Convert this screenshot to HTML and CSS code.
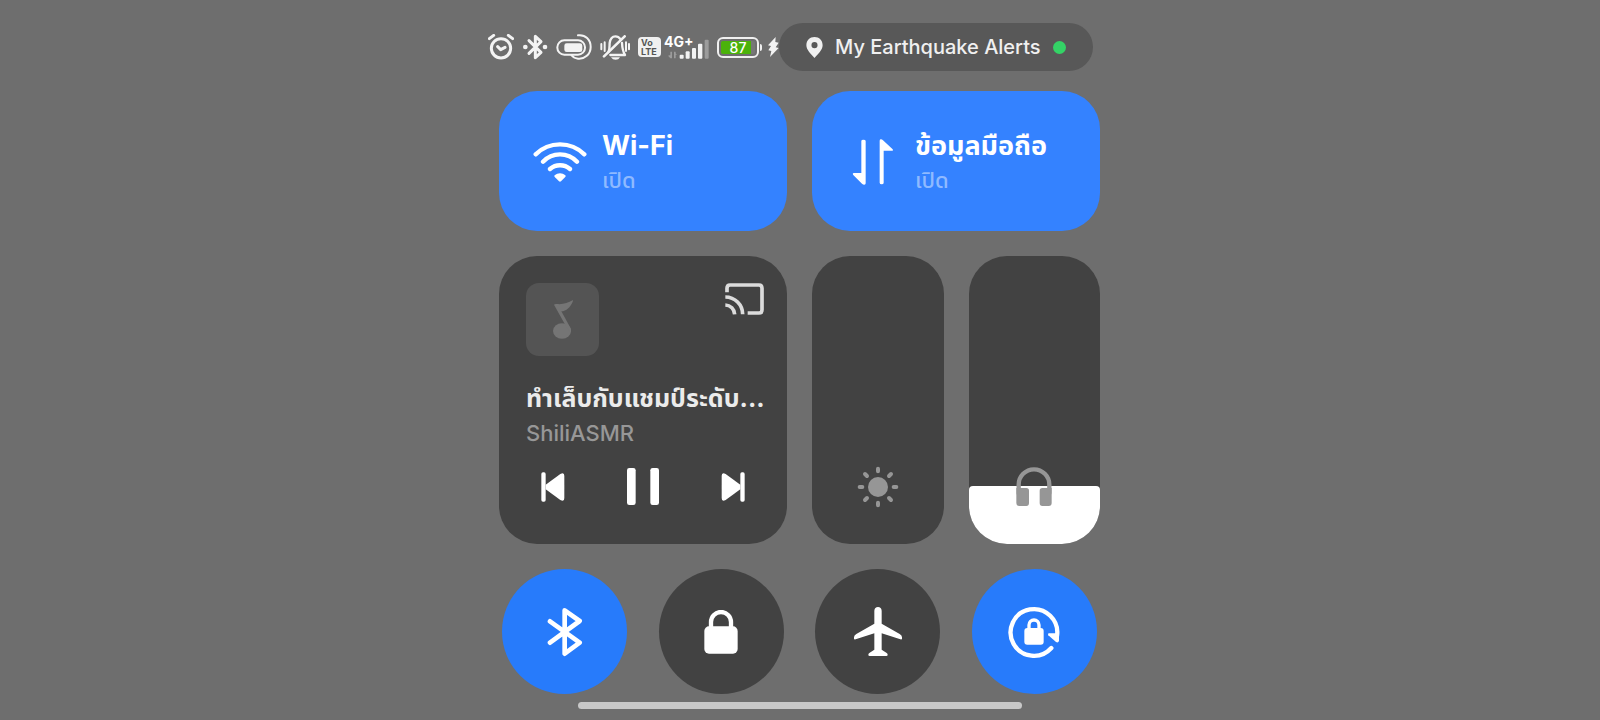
FILE: index.html
```html
<!DOCTYPE html>
<html lang="th">
<head>
    <meta charset="UTF-8">
    <meta name="viewport" content="width=device-width, initial-scale=1.0">
    <title>Control Center</title>
    <link rel="stylesheet" href="styles.css">
</head>
<body>
    <div class="panel">
        <header class="status">
            <div class="status-icons">
                <!-- alarm -->
                <svg class="line" width="26" height="26" viewBox="0 0 78 78" stroke-width="9">
                    <circle cx="39" cy="43" r="29"/>
                    <path d="M29 38L38 47L51 40M4 14L17 4M74 14L61 4"/>
                </svg>
                <!-- bluetooth connected -->
                <svg class="line" width="26" height="26" viewBox="0 0 78 78" stroke-width="9">
                    <path d="M21 20L57 55L40 71V7L57 23L21 58"/>
                    <circle class="solid" cx="10" cy="39" r="7"/>
                    <circle class="solid" cx="69" cy="39" r="7"/>
                </svg>
                <!-- toggle capsule -->
                <svg class="line" width="36" height="26" viewBox="0 0 108 78" stroke-width="6">
                    <rect x="4" y="19" width="83" height="43" rx="21"/>
                    <rect class="solid" x="25" y="28" width="54" height="26" rx="7"/>
                    <path d="M66 4C88 1 104 17 104 39S86 76 66 74C58 73 50 69 46 63"/>
                </svg>
                <!-- vibrate / silent -->
                <svg class="line" width="30" height="26" viewBox="0 0 90 78" stroke-width="7">
                    <path d="M25 54C30 46 28 36 29 27C31 13 37 7 46 7C52 7 57 9 60 14M66 27C67 45 68 52 75 63H31"/>
                    <path d="M74 7L12 67" stroke-width="8"/>
                    <path d="M4 30V46M14 25V51M78 25V51M87 30V46" stroke-width="6"/>
                    <path class="solid" stroke="none" d="M33 70H60C55 80 39 80 33 70Z"/>
                </svg>
                <div class="network">
                    <div class="volte"><span>Vo</span><span>LTE</span></div>
                    <div class="signal">
                        <span class="signal-type">4G+</span>
                        <svg class="signal-bars" width="43" height="20" viewBox="0 0 129 60">
                            <path class="faint" d="M13 38h5v20h-5zM6 50l7 8v-10zM24 38l9 9h-9zM24 38h5v20h-5z"/>
                            <rect x="41" y="47" width="12" height="12" rx="3"/>
                            <rect x="59" y="37" width="12" height="22" rx="3"/>
                            <rect x="78" y="27" width="12" height="32" rx="3"/>
                            <rect x="96" y="14" width="13" height="45" rx="3"/>
                            <rect class="faint" x="116" y="2" width="12" height="57" rx="3"/>
                        </svg>
                    </div>
                </div>
                <div class="power">
                    <div class="battery"><span class="battery-level">87</span></div>
                    <svg width="11" height="20" viewBox="0 0 33 60">
                        <path d="M23 0L0 25L9 27L1 40L10 42L6 60L32 33L23 31L32 17L22 15Z"/>
                    </svg>
                </div>
            </div>
            <button class="pill">
                <svg width="17" height="21" viewBox="0 0 50 62">
                    <path fill-rule="evenodd" d="M25 0C11 0 1 10 1 24C1 38 15 50 25 62C35 50 49 38 49 24C49 10 39 0 25 0ZM25 15a9 9 0 1 1 0 18a9 9 0 1 1 0-18Z"/>
                </svg>
                <span>My Earthquake Alerts</span>
                <i class="dot"></i>
            </button>
        </header>

        <main class="grid">
            <button class="tile">
                <span class="tile-icon">
                    <svg class="line" width="54" height="40" viewBox="0 0 160 120" stroke-width="13">
                        <path d="M7 37A104 104 0 0 1 153 37M29 59A70 70 0 0 1 131 59M50 81A46 46 0 0 1 110 81"/>
                        <path class="solid" stroke="none" d="M64 100C73 92 87 92 96 100C98 102 97 104 95 106L83 118Q80 120 77 118L65 106C63 104 62 102 64 100Z"/>
                    </svg>
                </span>
                <span class="tile-text">
                    <span class="tile-name">Wi-Fi</span>
                    <span class="tile-state">เปิด</span>
                </span>
            </button>
            <button class="tile">
                <span class="tile-icon">
                    <svg width="42" height="46" viewBox="0 0 124 138">
                        <path d="M27 6Q27 2 33 2Q40 2 40 6V133Q40 137 36 137Q32 137 29 134L2 107Q0 103 4 102H27Z"/>
                        <path d="M82 5Q82 1 86 1Q89 1 92 4L121 31Q124 35 120 35H94V131Q94 136 88 136Q82 136 82 131Z"/>
                    </svg>
                </span>
                <span class="tile-text">
                    <span class="tile-name">ข้อมูลมือถือ</span>
                    <span class="tile-state">เปิด</span>
                </span>
            </button>

            <section class="media">
                <div class="media-top">
                    <div class="art">
                        <svg width="20" height="39" viewBox="0 0 60 117">
                            <ellipse cx="27" cy="93" rx="27" ry="23"/>
                            <path d="M3 14Q5 11 12 12C30 14 45 8 59 1Q62 0 59 5C52 22 40 33 25 34L53 85Q55 91 53 98L42 84Z"/>
                        </svg>
                    </div>
                    <button class="icon-button" aria-label="Cast">
                        <svg class="cast" width="39" height="32" viewBox="0 0 117 96" stroke-width="11">
                            <path d="M6 28V16Q6 6 15 6H102Q111 6 111 16V80Q111 90 102 90H68"/>
                            <path d="M1 42A52 52 0 0 1 53 94M1 66A29 29 0 0 1 29 94"/>
                        </svg>
                    </button>
                </div>
                <div class="media-title">ทำเล็บกับแชมป์ระดับ...</div>
                <div class="media-artist">ShiliASMR</div>
                <div class="controls">
                    <button class="icon-button" aria-label="Previous">
                        <svg width="24" height="30" viewBox="0 0 70 90">
                            <rect x="0" y="1" width="13" height="88" rx="5"/>
                            <path d="M13 38L57 6Q69 -1 69 12V78Q69 91 57 84L13 52Z"/>
                        </svg>
                    </button>
                    <button class="icon-button" aria-label="Pause">
                        <svg width="32" height="37" viewBox="0 0 96 111">
                            <rect x="0" y="0" width="26" height="111" rx="7"/>
                            <rect x="70" y="0" width="26" height="111" rx="7"/>
                        </svg>
                    </button>
                    <button class="icon-button" aria-label="Next">
                        <svg width="24" height="30" viewBox="0 0 70 90">
                            <rect x="57" y="1" width="13" height="88" rx="5"/>
                            <path d="M57 38L13 6Q1 -1 1 12V78Q1 91 13 84L57 52Z"/>
                        </svg>
                    </button>
                </div>
            </section>

            <label class="slider">
                <input type="range" min="0" max="100" value="0" aria-label="Brightness">
                <svg class="slider-icon" width="42" height="42" viewBox="0 0 126 126">
                    <circle cx="63" cy="63" r="30"/>
                    <path stroke-width="12" d="M63 8V16M63 110V118M8 63H16M110 63H118M24 24L30 30M96 96L102 102M24 102L30 96M96 30L102 24"/>
                </svg>
            </label>
            <label class="slider">
                <span class="slider-fill" style="height: 20%"></span>
                <input type="range" min="0" max="100" value="20" aria-label="Volume">
                <svg class="slider-icon" width="42" height="42" viewBox="0 0 126 126">
                    <path class="open" stroke-width="13" d="M17 82V56A46 46 0 0 1 109 56V82"/>
                    <path stroke="none" d="M10 66H40Q48 66 48 74V111Q48 120 40 120H19Q10 120 10 111ZM116 66H88Q80 66 80 74V111Q80 120 88 120H107Q116 120 116 111Z"/>
                </svg>
            </label>

            <button class="round on" aria-label="Bluetooth">
                <svg class="line" width="36" height="50" viewBox="0 0 108 150" stroke-width="14">
                    <path d="M9 43L98 107L53 140V10L98 42L9 107"/>
                </svg>
            </button>
            <button class="round" aria-label="Lock">
                <svg width="34" height="44" viewBox="0 0 102 132">
                    <path class="open" stroke-width="13" d="M21 58V36A30 30 0 0 1 81 36V58"/>
                    <rect x="1" y="49" width="100" height="82" rx="14"/>
                </svg>
            </button>
            <button class="round" aria-label="Airplane mode">
                <svg width="48" height="49" viewBox="0 0 144 147">
                    <path d="M61 11Q62 0 72 0Q82 0 83 11V50L137 81Q144 85 144 91V95Q144 98 139 97L83 79V128L98 138Q101 140 101 143Q101 147 97 147H47Q43 147 43 143Q43 140 46 138L61 128V79L5 97Q0 98 0 95V91Q0 85 7 81L61 50Z"/>
                </svg>
            </button>
            <button class="round on" aria-label="Rotation lock">
                <svg width="52" height="52" viewBox="0 0 156 156">
                    <path class="open" stroke-width="13" d="M130 126A70 70 0 1 1 147 90"/>
                    <path d="M122 82H153V104Q151 112 144 108L121 88Q118 83 122 82Z"/>
                    <path class="open" stroke-width="10" d="M63 70V57A15 15 0 0 1 93 57V70"/>
                    <rect x="49" y="66" width="58" height="50" rx="9"/>
                </svg>
            </button>
        </main>
        <div class="home-bar"></div>
    </div>
</body>
</html>
```

FILE: styles.css
```css
* {
    box-sizing: border-box;
}
body {
    margin: 0;
    background: #6e6e6e;
    color: #fff;
    font-family: Inter, "Noto Sans Thai", "Noto Sans", sans-serif;
}
button {
    margin: 0;
    padding: 0;
    border: none;
    background: none;
    color: inherit;
    font: inherit;
    text-align: left;
    cursor: pointer;
}
svg {
    display: block;
    flex: none;
    fill: #fff;
}
.line, .cast, .open {
    fill: none;
    stroke: #fff;
    stroke-linecap: round;
    stroke-linejoin: round;
}
.solid {
    fill: #fff;
    stroke: none;
}
.panel {
    max-width: 624px;
    margin: 0 auto;
    padding-top: 23px;
}

/* status bar */
.status {
    display: flex;
    align-items: center;
    justify-content: space-between;
    height: 48px;
    padding-right: 21px;
}
.status-icons, .network, .power {
    display: flex;
    align-items: center;
    gap: 8px;
}
.status-icons svg {
    opacity: 0.92;
}
.network {
    gap: 3px;
}
.power {
    gap: 9px;
}
.volte {
    display: flex;
    flex-direction: column;
    align-items: flex-start;
    width: 23px;
    height: 20px;
    padding: 1px 3px;
    border-radius: 4px;
    background: #f0f0f0;
    color: #555;
    font-size: 9px;
    font-weight: 700;
    line-height: 9px;
}
.signal {
    display: grid;
    width: 45px;
    height: 24px;
}
.signal-type, .signal-bars {
    grid-area: 1 / 1;
}
.signal-type {
    font-size: 14px;
    font-weight: 700;
    line-height: 14px;
}
.signal-bars {
    align-self: end;
    justify-self: end;
}
.faint {
    opacity: 0.35;
}
.battery {
    position: relative;
    width: 42px;
    height: 21px;
    padding: 2px;
    border: 2px solid #f0f0f0;
    border-radius: 6px;
}
.battery::after {
    content: "";
    position: absolute;
    top: 5px;
    right: -5px;
    width: 2px;
    height: 7px;
    border-radius: 0 2px 2px 0;
    background: #f0f0f0;
}
.battery-level {
    display: block;
    height: 13px;
    border-radius: 2px;
    background: linear-gradient(to right, #4bb20a 87%, #777 87%);
    font-size: 14px;
    font-weight: 500;
    line-height: 13px;
    text-align: center;
}
.pill {
    display: flex;
    align-items: center;
    gap: 12px;
    height: 48px;
    padding: 0 27px;
    border-radius: 24px;
    background: #585858;
    color: #f0f0f0;
    font-size: 20px;
    font-weight: 500;
    white-space: nowrap;
}
.pill svg {
    fill: #f0f0f0;
}
.dot {
    width: 13px;
    height: 13px;
    border-radius: 50%;
    background: #34d366;
}

/* tiles */
.grid {
    display: grid;
    grid-template-columns: repeat(4, 1fr);
    gap: 25px;
    padding: 20px 12px 0 11px;
}
.tile {
    grid-column: span 2;
    display: flex;
    align-items: center;
    gap: 15px;
    height: 140px;
    padding: 2px 34px 0;
    border-radius: 38px;
    background: #3482ff;
}
.tile-icon {
    display: flex;
    justify-content: center;
    width: 54px;
}
.tile-text {
    display: flex;
    flex-direction: column;
}
.tile-name {
    font-size: 27px;
    font-weight: 700;
    line-height: 36px;
}
.tile-state {
    color: #8fbaff;
    font-size: 22px;
    font-weight: 500;
    line-height: 32px;
}

/* media player */
.media {
    grid-column: span 2;
    height: 288px;
    padding: 27px 23px 0 27px;
    border-radius: 38px;
    background: #424242;
}
.media-top {
    display: flex;
    align-items: flex-start;
    justify-content: space-between;
}
.art {
    display: flex;
    align-items: center;
    justify-content: center;
    width: 73px;
    height: 73px;
    border-radius: 13px;
    background: #545454;
}
.art svg {
    fill: #757575;
}
.cast {
    stroke: #dcdcdc;
    stroke-linecap: butt;
}
.media-title {
    margin-top: 24px;
    color: #ebebeb;
    font-size: 25px;
    font-weight: 700;
    line-height: 36px;
    white-space: nowrap;
}
.media-artist {
    color: #979797;
    font-size: 22px;
    font-weight: 500;
    line-height: 34px;
}
.controls {
    display: flex;
    align-items: center;
    justify-content: space-between;
    margin-top: 18px;
    padding: 0 19px 0 15px;
}

/* sliders */
.slider {
    position: relative;
    display: flex;
    align-items: flex-end;
    justify-content: center;
    height: 288px;
    padding-bottom: 36px;
    border-radius: 38px;
    background: #424242;
    overflow: hidden;
}
.slider input {
    position: absolute;
    inset: 0;
    width: 100%;
    height: 100%;
    margin: 0;
    appearance: none;
    background: none;
    writing-mode: vertical-lr;
    direction: rtl;
}
.slider input::-webkit-slider-thumb {
    appearance: none;
    width: 100%;
    height: 1px;
    background: none;
}
.slider-fill {
    position: absolute;
    right: 0;
    bottom: 0;
    left: 0;
    border-radius: 4px 4px 0 0;
    background: #fff;
}
.slider-icon {
    position: relative;
    fill: #969696;
    stroke: #969696;
    stroke-linecap: round;
    pointer-events: none;
}
.slider-icon circle {
    stroke: none;
}
.slider-icon .open {
    stroke: #969696;
}

/* round toggles */
.round {
    display: flex;
    align-items: center;
    justify-content: center;
    justify-self: center;
    width: 125px;
    height: 125px;
    border-radius: 50%;
    background: #424242;
}
.round.on {
    background: #277bfb;
}
.home-bar {
    width: 71%;
    height: 7px;
    margin: 8px auto 0;
    border-radius: 4px;
    background: #c8c8c8;
}
```
